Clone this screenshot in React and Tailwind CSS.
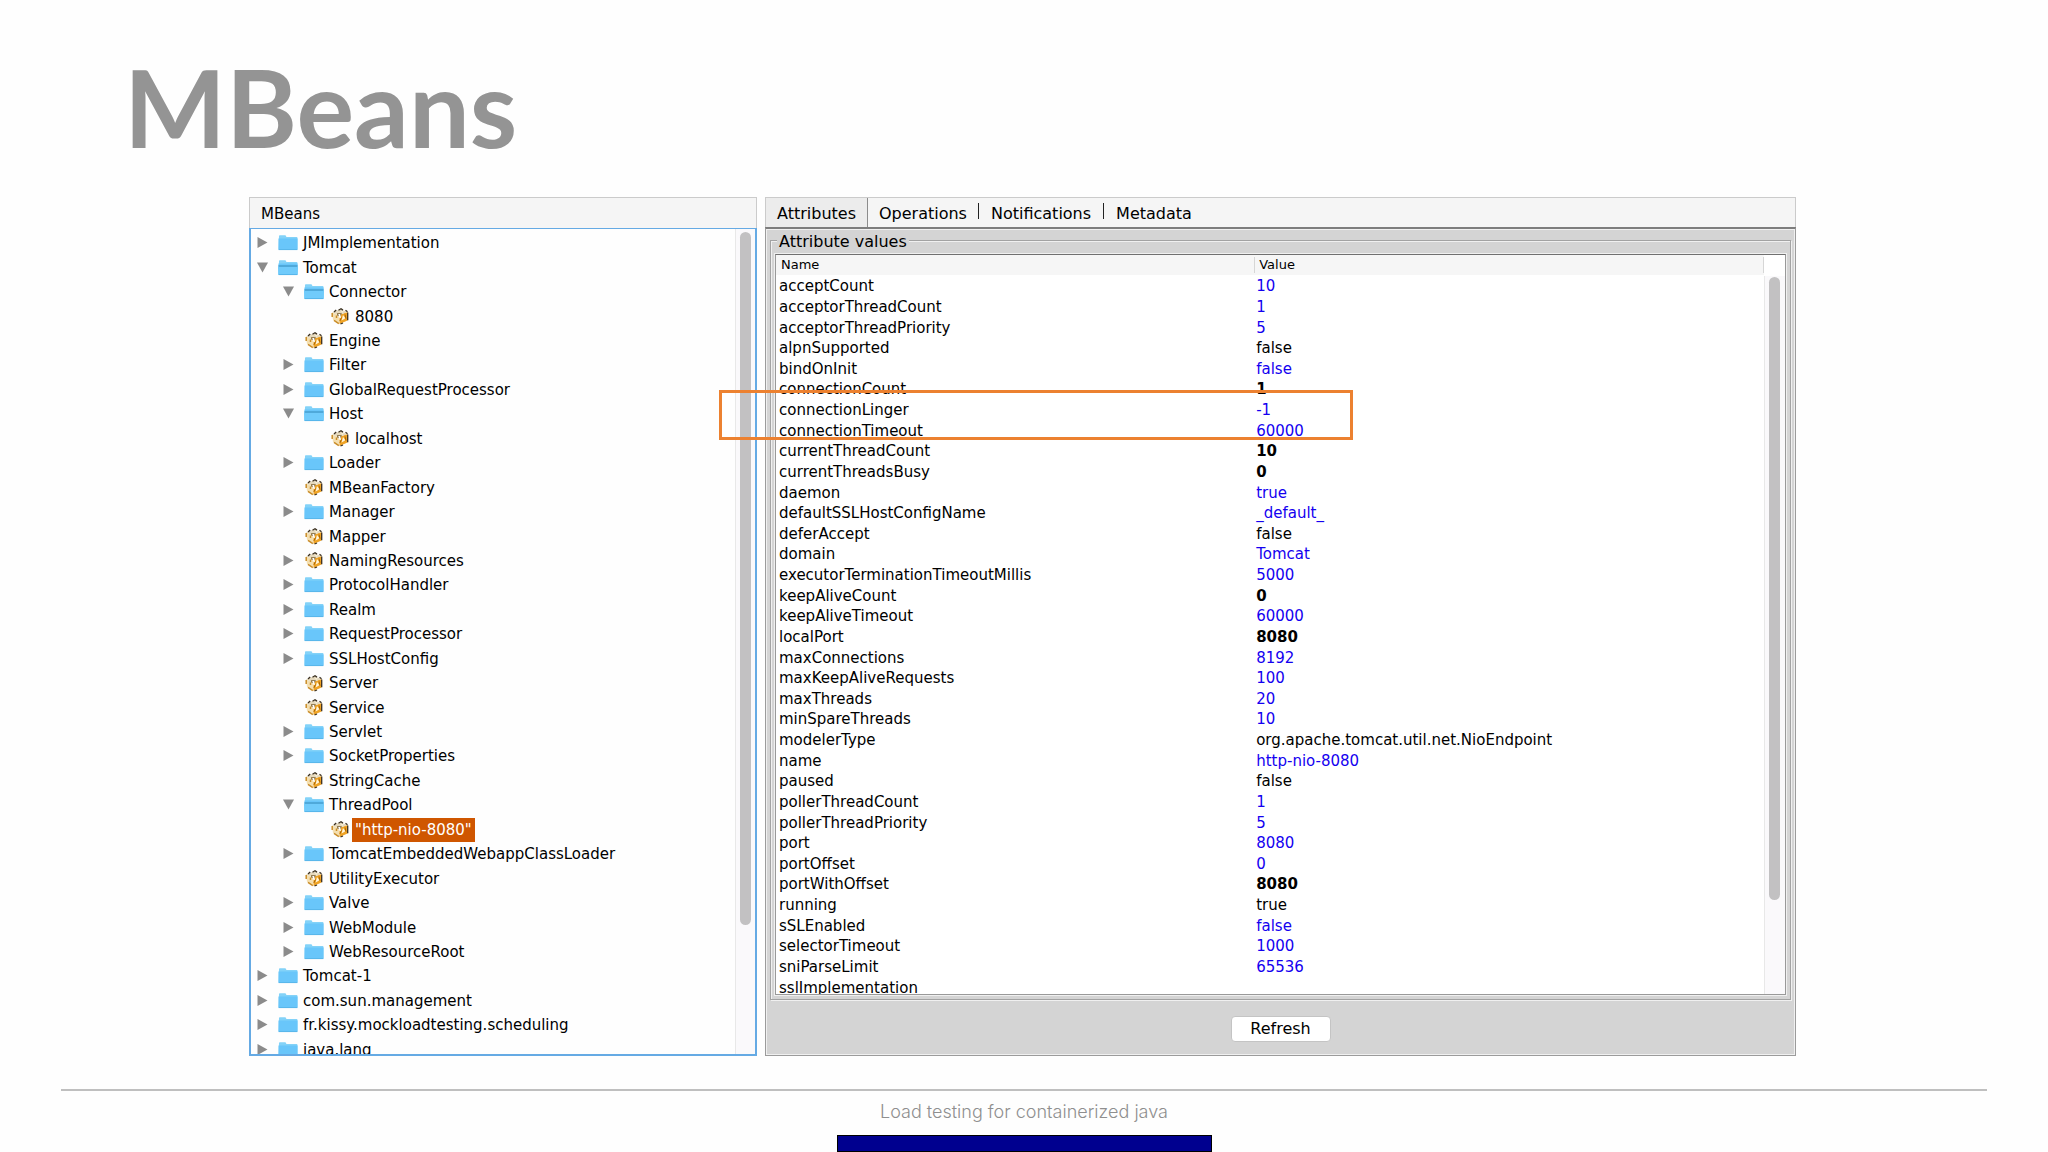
import React, { useState } from "react";

// [level, kind, label, open]
const Tree = [
  [0, "folder", "JMImplementation"],
  [0, "folder", "Tomcat", true],
  [1, "folder", "Connector", true],
  [2, "bean", "8080"],
  [1, "bean", "Engine"],
  [1, "folder", "Filter"],
  [1, "folder", "GlobalRequestProcessor"],
  [1, "folder", "Host", true],
  [2, "bean", "localhost"],
  [1, "folder", "Loader"],
  [1, "bean", "MBeanFactory"],
  [1, "folder", "Manager"],
  [1, "bean", "Mapper"],
  [1, "beanGroup", "NamingResources"],
  [1, "folder", "ProtocolHandler"],
  [1, "folder", "Realm"],
  [1, "folder", "RequestProcessor"],
  [1, "folder", "SSLHostConfig"],
  [1, "bean", "Server"],
  [1, "bean", "Service"],
  [1, "folder", "Servlet"],
  [1, "folder", "SocketProperties"],
  [1, "bean", "StringCache"],
  [1, "folder", "ThreadPool", true],
  [2, "bean", '"http-nio-8080"'],
  [1, "folder", "TomcatEmbeddedWebappClassLoader"],
  [1, "bean", "UtilityExecutor"],
  [1, "folder", "Valve"],
  [1, "folder", "WebModule"],
  [1, "folder", "WebResourceRoot"],
  [0, "folder", "Tomcat-1"],
  [0, "folder", "com.sun.management"],
  [0, "folder", "fr.kissy.mockloadtesting.scheduling"],
  [0, "folder", "java.lang"],
];

// w = writable (blue), b = plotted (bold)
const Attributes = [
  ["acceptCount", "10", "w"],
  ["acceptorThreadCount", "1", "w"],
  ["acceptorThreadPriority", "5", "w"],
  ["alpnSupported", "false"],
  ["bindOnInit", "false", "w"],
  ["connectionCount", "1", "b"],
  ["connectionLinger", "-1", "w"],
  ["connectionTimeout", "60000", "w"],
  ["currentThreadCount", "10", "b"],
  ["currentThreadsBusy", "0", "b"],
  ["daemon", "true", "w"],
  ["defaultSSLHostConfigName", "_default_", "w"],
  ["deferAccept", "false"],
  ["domain", "Tomcat", "w"],
  ["executorTerminationTimeoutMillis", "5000", "w"],
  ["keepAliveCount", "0", "b"],
  ["keepAliveTimeout", "60000", "w"],
  ["localPort", "8080", "b"],
  ["maxConnections", "8192", "w"],
  ["maxKeepAliveRequests", "100", "w"],
  ["maxThreads", "20", "w"],
  ["minSpareThreads", "10", "w"],
  ["modelerType", "org.apache.tomcat.util.net.NioEndpoint"],
  ["name", "http-nio-8080", "w"],
  ["paused", "false"],
  ["pollerThreadCount", "1", "w"],
  ["pollerThreadPriority", "5", "w"],
  ["port", "8080", "w"],
  ["portOffset", "0", "w"],
  ["portWithOffset", "8080", "b"],
  ["running", "true"],
  ["sSLEnabled", "false", "w"],
  ["selectorTimeout", "1000", "w"],
  ["sniParseLimit", "65536", "w"],
  ["sslImplementation", ""],
];

const Tabs = ["Attributes", "Operations", "Notifications", "Metadata"];

const indents = ["pl-[6px]", "pl-8", "pl-[58px]"];
const valueStyles = { w: "text-[#1400f0]", b: "font-bold" };

function Arrow({ open }) {
  return (
    <svg viewBox="0 0 12 12" className="w-3 h-3 shrink-0" fill="#8b8b8b">
      {open ? <path d="M0 0.5h11L5.5 10.5z" /> : <path d="M0.5 0v11L10.5 5.5z" />}
    </svg>
  );
}

function FolderIcon({ open }) {
  return (
    <svg viewBox="0 0 20 16" className="w-5 h-4 shrink-0">
      <path d="M1 1q0-.8.8-.8h5.4q.6 0 .8.8l.4 1h10.2q.9 0 .9 1v11q0 .8-.8.8H1.3q-.8 0-.8-.8z" fill="#83d2f8" />
      <path d="M.5 3.6h19V14q0 .8-.8.8H1.3q-.8 0-.8-.8z" fill="#69c6fa" />
      {open && <path d="M.5 5h19v3.5H.5z" fill="#4fa9da" />}
      {open && <path d="M0 7h20l-.4 7.2q0 .7-.8.7H1.2q-.8 0-.8-.7z" fill="#70cbfb" />}
      <path d="M.6 14.6h18.8" stroke="#4eaee4" strokeWidth=".8" />
    </svg>
  );
}

function BeanIcon() {
  return (
    <svg viewBox="0 0 18 17" className="w-[18px] h-[17px] shrink-0">
      <path d="M1 4.5 8 7v8.5L2 12z" fill="#f4dfb0" />
      <path d="M8 7l8.5-3v8.5L8.6 16z" fill="#efa325" />
      <path d="M1 4.5 9 1.3l7.5 2.7L8 7z" fill="#e5d9bd" />
      <path d="M3 4l2.2-2M7.5 2.2 10 .8l2 1.3M14.5 2.2l2 1.5M16.7 4.5v7.8M9.5 16l2.5-1" stroke="#3b3020" strokeWidth="1.3" fill="none" />
      <path d="M1.2 5v4M5.5 7.5v2.6M3 12.3 7.8 15.6" stroke="#c98c28" strokeWidth="1.5" fill="none" />
      <path d="M9.8 3.2h3l-1.4 1.5zM12 7l2.4 3.2-3.8 2.4z" fill="#fff6dd" />
      <path d="M6 5.2h4.8l-1.2 3L6.4 7.8z" fill="#7b6030" />
      <path d="M7.2 6h2l.8 3.6-1.4 1z" fill="#fff" />
      <path d="M10.5 9.5l-1.6 3.4M14 6.5l1 4.2" stroke="#a86606" strokeWidth="1" />
    </svg>
  );
}

function TreeRow({ row, selected, onSelect }) {
  const [level, kind, label, open] = row;
  return (
    <li className={`flex items-center whitespace-nowrap ${indents[level]}`}>
      <span className="w-3 mr-2 flex">{kind !== "bean" && <Arrow open={open} />}</span>
      <span className="w-[22px] mr-px flex justify-center">
        {kind === "folder" ? <FolderIcon open={open} /> : <BeanIcon />}
      </span>
      <button
        onClick={() => onSelect(label)}
        className={`h-6 px-[3px] leading-6 ${selected ? "bg-[#cf5600] text-white" : ""}`}
      >
        {label}
      </button>
    </li>
  );
}

function MBeanTree() {
  const [selected, setSelected] = useState('"http-nio-8080"');
  return (
    <section className="w-[508px] shrink-0 flex flex-col">
      <h2 className="h-[31px] shrink-0 pl-[11px] leading-8 bg-[#f5f5f5] border border-b-0 border-[#cbcbcb]">
        MBeans
      </h2>
      <div className="flex-1 min-h-0 flex border-2 border-t border-[#65aae4] overflow-hidden">
        <ul className="flex-1 h-[833px] grid auto-rows-fr pt-[2px]">
          {Tree.map((row) => (
            <TreeRow key={row[2]} row={row} selected={row[2] === selected} onSelect={setSelected} />
          ))}
        </ul>
        <div className="w-5 pt-[3px] pl-1 bg-[#faf9fb] border-l border-[#e8e8e8]">
          <div className="w-[11px] h-[693px] rounded-full bg-[#c2c1c2]" />
        </div>
      </div>
    </section>
  );
}

function TabBar() {
  const [tab, setTab] = useState("Attributes");
  return (
    <div className="h-[30px] shrink-0 flex bg-[#f5f5f5] border border-b-0 border-[#cbcbcb] text-base">
      {Tabs.map((item, index) => (
        <div key={item} className="flex items-center">
          {index > 1 && <span className="w-px h-4 mb-1 bg-[#222]" />}
          <button
            onClick={() => setTab(item)}
            className={`h-full pt-[2px] ${index > 1 ? "px-3" : "px-[11px]"} ${
              tab === item ? "bg-[#ececec] border-r border-[#8c8c8c]" : ""
            }`}
          >
            {item}
          </button>
        </div>
      ))}
    </div>
  );
}

function AttributeTable() {
  return (
    <div className="flex-1 min-h-0 flex bg-white border border-[#999999] border-t-[#707070] outline outline-[#f0f0f0] overflow-hidden">
      <table className="flex-1 h-[742px] border-collapse text-left table-fixed whitespace-nowrap">
        <thead className="bg-[#f6f6f6] text-[13px]">
          <tr>
            <th className="w-[48.4%] p-0 pl-[5px] font-normal leading-5">Name</th>
            <th className="p-0 font-normal leading-5">
              <div className="pl-1 leading-4 border-x border-[#d6d6d6]">Value</div>
            </th>
          </tr>
        </thead>
        <tbody>
          {Attributes.map(([name, value, style]) => (
            <tr key={name}>
              <td className="p-0 pl-[3px] pt-[3px] leading-[17px]">{name}</td>
              <td className={`p-0 pl-[2px] pt-[3px] leading-[17px] ${style ? valueStyles[style] : ""}`}>
                {value}
              </td>
            </tr>
          ))}
        </tbody>
      </table>
      <div className="w-[21px] mt-[21px] pt-px pl-1 bg-[#faf9fb] border-l border-[#e8e8e8]">
        <div className="w-[11px] h-[623px] rounded-full bg-[#c2c1c2]" />
      </div>
    </div>
  );
}

export default function App() {
  return (
    <div className="h-screen flex flex-col bg-[#fefefe] overflow-hidden text-black">
      <h1 className="h-[197px] shrink-0 pl-[124px] pt-[46px] text-[108px] leading-[120px] font-bold text-[#949494] font-['Lato',sans-serif]">
        MBeans
      </h1>
      <main className="relative h-[859px] min-h-0 flex gap-2 pl-[249px] pr-[252px] text-[15px] font-['DejaVu_Sans',sans-serif]">
        <MBeanTree />
        <section className="flex-1 min-w-0 flex flex-col">
          <TabBar />
          <div className="flex-1 min-h-0 flex flex-col items-center bg-[#d4d4d4] border border-[#9b9b9b] border-t-2 border-t-[#7d7d7d] ring-1 ring-inset ring-[#f0f0f0] px-1 pt-px">
            <fieldset className="w-full min-w-0 flex-1 min-h-0 flex flex-col border border-[#a3a3a3] px-1 pt-1 pb-1 shadow-[inset_1px_1px_#f0f0f0,1px_1px_#f0f0f0]">
              <legend className="ml-[2px] px-[2px] pt-1 text-base leading-4 bg-[#d4d4d4]">Attribute values</legend>
              <AttributeTable />
            </fieldset>
            <button className="h-[26px] w-[100px] shrink-0 mt-4 mb-[13px] rounded bg-white border border-[#c4c4c4] text-base leading-6">
              Refresh
            </button>
          </div>
        </section>
        <div className="absolute left-[719px] top-[193px] w-[634px] h-[50px] border-[3px] border-[#ec8130] pointer-events-none" />
      </main>
      <footer className="flex-1 flex flex-col items-center mt-[33px] mx-[61px] border-t-2 border-[#bfbfbf]">
        <p className="mt-[7px] text-lg leading-7 font-light text-[#8f8f8f] font-['Inter',sans-serif]">
          Load testing for containerized java
        </p>
        <div className="mt-auto w-[375px] h-[17px] bg-[#00008f] border border-black" />
      </footer>
    </div>
  );
}
